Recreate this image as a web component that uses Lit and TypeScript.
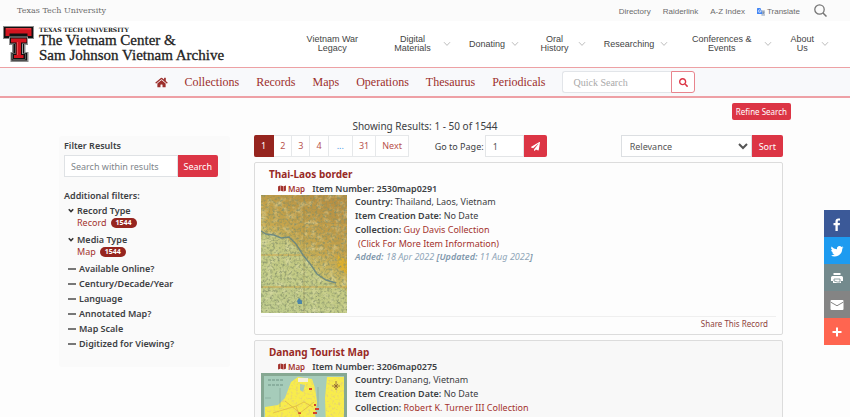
import { LitElement, html, svg, css, nothing } from "lit";
import { customElement, property } from "lit/decorators.js";

interface MapRecord {
  title: string;
  item: string;
  country: string;
  date: string;
  collection: string;
  added: string;
  updated: string;
  art: "terrain" | "city";
}

const SITE_NAV = [
  { label: "Vietnam War Legacy", menu: false },
  { label: "Digital Materials", menu: true },
  { label: "Donating", menu: true },
  { label: "Oral History", menu: true },
  { label: "Researching", menu: true },
  { label: "Conferences & Events", menu: true },
  { label: "About Us", menu: true },
];

const ARCHIVE_NAV = ["Collections", "Records", "Maps", "Operations", "Thesaurus", "Periodicals"];

const CLOSED_FILTERS = [
  "Available Online?",
  "Century/Decade/Year",
  "Language",
  "Annotated Map?",
  "Map Scale",
  "Digitized for Viewing?",
];

const RECORDS: MapRecord[] = [
  {
    title: "Thai-Laos border",
    item: "2530map0291",
    country: "Thailand, Laos, Vietnam",
    date: "No Date",
    collection: "Guy Davis Collection",
    added: "18 Apr 2022",
    updated: "11 Aug 2022",
    art: "terrain",
  },
  {
    title: "Danang Tourist Map",
    item: "3206map0275",
    country: "Danang, Vietnam",
    date: "No Date",
    collection: "Robert K. Turner III Collection",
    added: "18 Apr 2022",
    updated: "11 Aug 2022",
    art: "city",
  },
];

const chevron = html`<svg class="chev" viewBox="0 0 8 6" aria-hidden="true">
  <path d="M1 1.2 4 4.4 7 1.2" fill="none" stroke="currentColor" />
</svg>`;

const magnifier = html`<svg class="glass" viewBox="0 0 512 512" aria-hidden="true">
  <path fill="currentColor" d="M505 442.700 405.300 343c-4.500-4.500-10.600-7-17-7H372c27.600-35.300 44-79.700 44-128C416 93.100 322.900 0 208 0S0 93.100 0 208s93.100 208 208 208c48.300 0 92.700-16.400 128-44v16.300c0 6.400 2.500 12.500 7 17l99.700 99.700c9.400 9.400 24.600 9.400 33.900 0l28.300-28.300c9.400-9.400 9.400-24.600.1-34zM208 336c-70.700 0-128-57.200-128-128 0-70.700 57.200-128 128-128 70.700 0 128 57.200 128 128 0 70.700-57.200 128-128 128z" />
</svg>`;

const mapIcon = html`<svg class="map-icon" viewBox="0 0 576 512" aria-hidden="true">
  <path fill="currentColor" d="M0 117.660v346.320c0 11.320 11.430 19.060 21.940 14.860L160 416V32L20.120 87.950A32.006 32.006 0 0 0 0 117.660zM192 416l192 64V96L192 32v384zM554.060 33.160 416 96v384l139.880-55.950A31.996 31.996 0 0 0 576 394.340V48.020c0-11.320-11.430-19.060-21.940-14.860z" />
</svg>`;

@customElement("map-thumb")
export class MapThumb extends LitElement {
  @property() art: MapRecord["art"] = "terrain";

  static styles = css`
    :host { display: block; width: 86px; height: 118px; }
    svg { display: block; width: 100%; height: 100%; }
  `;

  private terrain() {
    return svg`
      <defs>
        <linearGradient id="land" x1="0.75" y1="0" x2="0.3" y2="1">
          <stop offset="0" stop-color="#b88f42" />
          <stop offset="0.4" stop-color="#c4a44c" />
          <stop offset="0.6" stop-color="#cbc06a" />
          <stop offset="1" stop-color="#c0c582" />
        </linearGradient>
        <filter id="grain" x="0" y="0" width="100%" height="100%">
          <feTurbulence type="fractalNoise" baseFrequency="0.42" numOctaves="3" seed="8" />
          <feColorMatrix values="0 0 0 0 0.22  0 0 0 0 0.27  0 0 0 0 0.14  2.600 0 0 0 -1.150" />
        </filter>
        <filter id="light" x="0" y="0" width="100%" height="100%">
          <feTurbulence type="fractalNoise" baseFrequency="0.16" numOctaves="3" seed="3" />
          <feColorMatrix values="0 0 0 0 0.82  0 0 0 0 0.8  0 0 0 0 0.48  0 2.400 0 0 -1.150" />
        </filter>
      </defs>
      <rect width="86" height="118" fill="url(#land)" />
      <path d="M0 38 26 43 44 62 60 84 86 96V118H0z" fill="#bfd092" opacity=".6" />
      <rect width="86" height="118" filter="url(#light)" opacity=".55" />
      <path d="M77 60 86 66V79L76 72z" fill="#e0b02c" opacity=".9" />
      <path d="M0 30H86M0 60H86M0 92H86" stroke="#d0a84c" stroke-width="1.500" opacity=".7" />
      <path d="M43 0V118" stroke="#8c7a40" stroke-width=".6" opacity=".7" />
      <path d="M0 36 5 39 13 40 20 43 28 42 35 49 42 60 50 70 56 79 65 85 75 88" fill="none" stroke="#5a8088" stroke-width="1.400" opacity=".85" />
      <rect width="86" height="118" filter="url(#grain)" opacity=".8" />
      <path d="M36 106 38 103 41 106V109H37z" fill="#4c86a8" />
    `;
  }

  private city() {
    return svg`
      <defs>
        <filter id="streets" x="0" y="0" width="100%" height="100%">
          <feTurbulence type="fractalNoise" baseFrequency="0.4" numOctaves="2" seed="5" />
          <feColorMatrix values="0 0 0 0 0.75  0 0 0 0 0.6  0 0 0 0 0.2  2.400 0 0 0 -1.200" />
          <feComposite in2="SourceGraphic" operator="in" />
        </filter>
      </defs>
      <rect width="86" height="118" fill="#86a892" />
      <rect x="3" y="3" width="80" height="112" fill="#a6ccba" />
      <path d="M4 34 17 32 24 25 30 9 37 4 51 6 54 15 56 29 54 42 58 56 64 70 68 118H4z" fill="#f8ec4c" />
      <path d="M66 4H83V118H76L70 76 65 52 64 25z" fill="#f8ec4c" />
      <path d="M39 11 44 12 42 19 39 17z" fill="#a6ccba" />
      <path filter="url(#streets)" d="M4 34 17 32 24 25 30 9 37 4 51 6 54 15 56 29 54 42 58 56 64 70 68 118H4zM66 4H83V118H76L70 76 65 52 64 25z" />
      <path d="M37 5H47V9H37z" fill="#f4efda" />
      <path d="M7 7H23M7 12H23" stroke="#6f9384" stroke-width="1" stroke-dasharray="3 1" />
      <path d="M19 15V34M57 14V34M4 25H10" stroke="#77998a" stroke-width=".5" />
      <path d="M54 35H58V37H54zM52 39H56V41H52zM48 15H51V17H48zM37 39H40V41H37zM53 31H55V33H53z" fill="#d3402c" />
      <path d="M75 8V17M71 13H79M73 11 77 15M77 11 73 15" stroke="#8c5f35" stroke-width=".8" />
      <path d="M35 33 43 29 52 34M24 28 39 40 53 29M12 40 35 33 40 47" fill="none" stroke="#d7a843" stroke-width=".6" />
    `;
  }

  render() {
    return html`<svg viewBox="0 0 86 118" preserveAspectRatio="none" role="img" aria-label="Map thumbnail">
      ${this.art === "terrain" ? this.terrain() : this.city()}
    </svg>`;
  }
}

@customElement("record-card")
export class RecordCard extends LitElement {
  @property({ attribute: false }) record!: MapRecord;

  static styles = css`
    :host { display: block; }
    .card { border: 1px solid #dcdcdc; border-radius: 2px; padding: 3px 6px 4px; }
    :host(.alt) .card { background: #f8f8f8; }
    a { color: #a3322d; text-decoration: none; }
    b { font-weight: 600; }
    .title { margin: 0 0 0 8px; font-size: 10px; line-height: 16px; font-weight: 700; }
    .title a { color: #982a26; }
    .number { display: flex; gap: 7px; margin-left: 17px; line-height: 13px; font-weight: 600; }
    .kind { display: flex; align-items: center; gap: 2px; font-size: 8px; }
    .map-icon { width: 8px; height: 7px; }
    .body { display: flex; gap: 8px; }
    .facts { line-height: 14px; }
    .facts p { margin: 0; }
    .more { padding-left: 3px; }
    .dates { color: #8fa5b8; font-style: italic; line-height: 12px; }
    .dates b { color: #7f97ac; }
    .foot { margin-top: 3px; border-top: 1px solid #efefef; padding: 1px 8px 0 0; text-align: right; font-size: 8px; line-height: 12px; }
    .foot a { color: #8f4440; }
  `;

  render() {
    const r = this.record;
    return html`<article class="card">
      <h2 class="title"><a href="#">${r.title}</a></h2>
      <div class="number">
        <a class="kind" href="#">${mapIcon}Map</a>
        <span>Item Number: ${r.item}</span>
      </div>
      <div class="body">
        <map-thumb .art=${r.art}></map-thumb>
        <div class="facts">
          <p><b>Country:</b> ${r.country}</p>
          <p><b>Item Creation Date:</b> ${r.date}</p>
          <p><b>Collection:</b> <a href="#">${r.collection}</a></p>
          <p class="more"><a href="#">(Click For More Item Information)</a></p>
          <p class="dates"><b>Added:</b> ${r.added} <b>[Updated:</b> ${r.updated}<b>]</b></p>
        </div>
      </div>
      <div class="foot"><a href="#">Share This Record</a></div>
    </article>`;
  }
}

@customElement("app-root")
export class AppRoot extends LitElement {
  static styles = css`
    :host {
      display: block;
      height: 100vh;
      overflow: hidden;
      background: #fdfdfd;
      color: #3c4043;
      font: 9px/13px "Noto Sans", sans-serif;
    }
    * { box-sizing: border-box; }
    a { text-decoration: none; color: inherit; }
    button, input, select { font: inherit; margin: 0; min-width: 0; }
    svg { display: block; flex: none; }

    .utility { display: flex; align-items: center; height: 21px; padding: 0 23px 0 17px; background: #fbfbfb; color: #6b6b6b; }
    .campus { font: 8px/12px "DejaVu Serif", serif; margin-right: auto; }
    .quick { display: flex; align-items: center; gap: 12px; font: 8px/12px "Liberation Sans", sans-serif; padding-top: 3px; }
    .translate { display: flex; align-items: center; gap: 2px; }
    .translate svg { width: 8px; height: 8px; }
    .open-search { border: 0; padding: 0; background: none; color: #757575; margin-left: 14px; }
    .open-search svg { width: 13px; height: 13px; }

    .masthead { display: flex; align-items: center; height: 46px; padding: 0 21px 0 3px; background: #fff; }
    .brand { display: flex; align-items: flex-start; gap: 5px; color: #222; }
    .brand-mark { width: 31px; height: 36px; }
    .brand-small { display: block; font: bold 6px/7px "DejaVu Serif", serif; }
    .brand-name { display: block; font: 15px/15px "Liberation Serif", serif; -webkit-text-stroke: 0.3px currentColor; white-space: nowrap; }
    .site-nav {
      display: grid;
      grid-template-columns: 74fr 69fr 55fr 55fr 69fr 91fr 45fr;
      gap: 12px;
      align-items: center;
      flex: 1;
      max-width: 534px;
      margin-left: auto;
      font: 9px/9px "Liberation Sans", sans-serif;
      color: #444;
    }
    .site-nav a { display: flex; align-items: center; text-align: center; }
    .site-nav span { flex: 1; padding: 0 4px; }
    .chev { width: 8px; height: 6px; color: #bdbdbd; }

    .archive-nav {
      display: flex;
      align-items: center;
      justify-content: center;
      gap: 17px;
      height: 31px;
      border-top: 1px solid #eda1a4;
      border-bottom: 2px solid #eea0a5;
      background: #f8f9fb;
      color: #9c2f2c;
      font: 12px/16px "Liberation Serif", serif;
    }
    .home svg { width: 13px; height: 11px; }
    .search { display: flex; }
    .search input { width: 109px; height: 22px; padding: 0 10px; border: 1px solid #e2e5e9; border-right: 0; border-radius: 3px 0 0 3px; background: #fff; font-size: 10px; }
    .search input::placeholder { color: #a9a9a9; }
    .search button { display: flex; align-items: center; justify-content: center; width: 24px; height: 22px; border: 1px solid #e8848d; border-radius: 0 3px 3px 0; background: #fff; color: #dc3545; padding: 0; }
    .glass { width: 9px; height: 9px; }

    .red { border: 0; background: #dc3545; color: #fff; border-radius: 2px; padding: 0 6px; height: 22px; }
    .refine { display: flex; justify-content: flex-end; padding: 5px 59px 0; }
    .refine .red { height: 17px; padding: 0 4px; font-size: 8px; }
    .showing { margin: 0; padding: 0 0 2px; text-align: center; font-size: 10px; line-height: 13px; }

    .content { display: grid; grid-template-columns: 171px minmax(0, 1fr); gap: 24px; padding: 0 67px 0 59px; align-items: start; }
    .filters { background: #fafafa; border-radius: 3px; padding: 3px 12px 17px 5px; margin-top: 1px; }
    .filters h2 { margin: 0; font-size: 9px; line-height: 13px; font-weight: 600; }
    .within { display: flex; margin: 3px 0 12px; }
    .within input { flex: 1; height: 22px; border: 1px solid #dfe2e5; border-radius: 0; background: #fff; padding: 0 6px; }
    .within input::placeholder { color: #80868b; }
    .within .red { border-radius: 0 2px 2px 0; }
    .group { margin: 2px 0 5px 4px; }
    .toggle { display: flex; align-items: center; gap: 3px; border: 0; background: none; padding: 0; color: inherit; font-weight: 600; line-height: 13px; }
    .group .chev { width: 6px; height: 5px; color: #333; stroke-width: 2; }
    .choice { display: flex; align-items: center; gap: 4px; margin-left: 9px; line-height: 11px; color: #a3322d; }
    .badge { background: #96251f; color: #fff; border-radius: 5px; padding: 0 5px; font-size: 7px; font-weight: 700; line-height: 10px; }
    .closed { margin: 4px 0 0 4px; display: grid; gap: 2px; }
    .dash { width: 8px; height: 2px; background: #777; }

    .controls { display: flex; align-items: flex-start; height: 22px; margin-bottom: 5px; }
    .pages { display: flex; list-style: none; margin: 0; padding: 0; color: #b9534e; }
    .pages a { display: block; height: 22px; line-height: 20px; padding: 0 6px; border: 1px solid #e6e8ea; border-left: 0; background: #fff; }
    .pages .current { background: #96251f; border-color: #96251f; color: #fff; border-radius: 2px 0 0 2px; padding: 0 7px; }
    .pages .gap { color: #4b9be8; padding: 0 8px; }
    .goto { display: flex; align-items: center; margin: 0 74px 0 auto; }
    .goto input { width: 39px; height: 22px; margin-left: 1px; border: 1px solid #e3e5e7; background: #fff; color: #555; padding: 0 7px; }
    .goto .red { display: flex; align-items: center; border-radius: 0 2px 2px 0; padding: 0 7px; }
    .goto svg { width: 9px; height: 9px; }
    .sort { display: flex; }
    .sort select { width: 131px; height: 22px; border: 1px solid #dcdfe2; border-radius: 0; background: #fff; color: #555; padding: 0 4px; }
    .sort .red { border-radius: 0 2px 2px 0; padding: 0 7px; }
    .list { display: grid; gap: 5px; }

    .share { position: fixed; right: 0; top: 210px; display: grid; grid-auto-rows: 27px; width: 26px; }
    .share a { display: flex; align-items: center; justify-content: center; color: #fff; }
    .share svg { width: 16px; height: 16px; }
    .facebook { background: #3b5998; }
    .twitter { background: #1d9bf0; }
    .print { background: #738a8d; }
    .email { background: #848484; }
    .addthis { background: #ff6550; }
  `;

  private brandMark() {
    return html`<svg class="brand-mark" viewBox="0 0 31 36" aria-hidden="true">
      <path fill="#8c8c8c" d="M0 0H31V13H25V19H22.500V26H25.500V36H7.500V26H9V19H6V13H0z" />
      <path fill="#111" d="M1 1H30V12H24V18H21V27H24V34.500H8.500V27H10.500V18H7V12H1z" />
      <path fill="#d3141f" d="M2.500 2H28.500V10H24.500V7.500H6.500V10H2.500z" />
      <path fill="#9a9a9a" d="M6 10.500H25V18H20V27.500H22.500V33.500H9.500V27.500H12V18H6z" />
      <path fill="#111" d="M7 11.500H24V17.500H19V28H22V33H10V28H12.500V17.500H7z" />
      <path fill="#d3141f" d="M8 12.500H23.500V16.500H18V29H20.500V32H11V29H13.500V16.500H8z" />
      <path fill="#ef5b60" d="M3 2.500H28V3.300H3zM14 16H14.800V29H14z" />
    </svg>`;
  }

  private filterGroup(name: string, value: string) {
    return html`<div class="group">
      <button class="toggle" type="button" aria-expanded="true">${chevron}${name}</button>
      <a class="choice" href="#">${value}<span class="badge">1544</span></a>
    </div>`;
  }

  render() {
    return html`
      <div class="utility">
        <a class="campus" href="#">Texas Tech University</a>
        <nav class="quick" aria-label="Utility">
          <a href="#">Directory</a>
          <a href="#">Raiderlink</a>
          <a href="#">A-Z Index</a>
          <a class="translate" href="#">
            <svg viewBox="0 0 16 16" aria-hidden="true">
              <path fill="#c3ccd8" d="M7 4H15A1 1 0 0 1 16 5V15A1 1 0 0 1 15 16H9z" />
              <path fill="#4285f4" d="M1 0H7L11 12H1A1 1 0 0 1 0 11V1A1 1 0 0 1 1 0z" />
              <path fill="none" stroke="#fff" stroke-width="1.300" d="M7 4.600A2.500 2.500 0 1 0 7.600 6.300H5" />
              <path fill="none" stroke="#5b6f8a" stroke-width="1" d="M10 8H15M12.500 7V8M14 8C13.500 10 12 11.500 11 12M11.500 9.500 14 12.500" />
            </svg>
            Translate
          </a>
        </nav>
        <button class="open-search" type="button" aria-label="Open search">
          <svg viewBox="0 0 13 13"><circle cx="5.500" cy="5.500" r="4.700" fill="none" stroke="currentColor" stroke-width="1.300" /><path d="M9 9 12.500 12.500" stroke="currentColor" stroke-width="1.500" /></svg>
        </button>
      </div>

      <header class="masthead">
        <a class="brand" href="#">
          ${this.brandMark()}
          <span>
            <span class="brand-small">TEXAS TECH UNIVERSITY</span>
            <span class="brand-name">The Vietnam Center &amp;</span>
            <span class="brand-name">Sam Johnson Vietnam Archive</span>
          </span>
        </a>
        <nav class="site-nav" aria-label="Site">
          ${SITE_NAV.map((n) => html`<a href="#"><span>${n.label}</span>${n.menu ? chevron : nothing}</a>`)}
        </nav>
      </header>

      <nav class="archive-nav" aria-label="Virtual archive">
        <a class="home" href="#" aria-label="Home">
          <svg viewBox="0 0 576 512"><path fill="currentColor" d="M280.370 148.260 96 300.110V464a16 16 0 0 0 16 16l112.060-.290a16 16 0 0 0 15.920-16V368a16 16 0 0 1 16-16h64a16 16 0 0 1 16 16v95.640a16 16 0 0 0 16 16.050L464 480a16 16 0 0 0 16-16V300L295.670 148.260a12.190 12.190 0 0 0-15.300 0zM571.600 251.470 488 182.560V44.050a12 12 0 0 0-12-12h-56a12 12 0 0 0-12 12v72.610L318.470 43a48 48 0 0 0-61 0L4.340 251.470a12 12 0 0 0-1.600 16.900l25.500 31A12 12 0 0 0 45.150 301l235.220-193.740a12.190 12.190 0 0 1 15.300 0L530.900 301a12 12 0 0 0 16.900-1.600l25.500-31a12 12 0 0 0-1.700-16.930z" /></svg>
        </a>
        ${ARCHIVE_NAV.map((n) => html`<a href="#">${n}</a>`)}
        <form class="search">
          <input type="text" placeholder="Quick Search" aria-label="Quick Search" />
          <button type="button" aria-label="Search">${magnifier}</button>
        </form>
      </nav>

      <div class="refine"><button class="red" type="button">Refine Search</button></div>
      <p class="showing">Showing Results: 1 - 50 of 1544</p>

      <main class="content">
        <aside class="filters">
          <h2><label for="within">Filter Results</label></h2>
          <form class="within">
            <input id="within" type="text" placeholder="Search within results" />
            <button class="red" type="button">Search</button>
          </form>
          <h2>Additional filters:</h2>
          ${this.filterGroup("Record Type", "Record")} ${this.filterGroup("Media Type", "Map")}
          <div class="closed">
            ${CLOSED_FILTERS.map((f) => html`<button class="toggle" type="button" aria-expanded="false"><span class="dash"></span>${f}</button>`)}
          </div>
        </aside>

        <section>
          <div class="controls">
            <ul class="pages">
              <li><a class="current" href="#" aria-current="page">1</a></li>
              <li><a href="#">2</a></li>
              <li><a href="#">3</a></li>
              <li><a href="#">4</a></li>
              <li><a class="gap" href="#">...</a></li>
              <li><a href="#">31</a></li>
              <li><a href="#">Next</a></li>
            </ul>
            <form class="goto">
              <label for="page">Go to Page:</label>
              <input id="page" type="text" .value=${"1"} />
              <button class="red" type="button" aria-label="Go">
                <svg viewBox="0 0 512 512"><path fill="currentColor" d="M476 3.200 12.500 270.600c-18.100 10.400-15.800 35.600 2.200 43.200L121 358.400l287.300-253.200c5.500-4.900 13.300 2.600 8.600 8.300L176 407v80.500c0 23.600 28.500 32.900 42.500 15.800L282 426l124.600 52.200c14.200 6 30.400-2.900 33-18.200l72-432C515 7.800 493.300-6.800 476 3.200z" /></svg>
              </button>
            </form>
            <form class="sort">
              <select aria-label="Sort by"><option>Relevance</option></select>
              <button class="red" type="button">Sort</button>
            </form>
          </div>
          <div class="list">
            ${RECORDS.map((r, i) => html`<record-card class=${i % 2 ? "alt" : ""} .record=${r}></record-card>`)}
          </div>
        </section>
      </main>

      <nav class="share" aria-label="Share">
        <a class="facebook" href="#" aria-label="Facebook"><svg viewBox="0 0 32 32"><path fill="currentColor" d="M22 5.160c-.4-.05-1.800-.17-3.400-.17-3.400 0-5.700 2.070-5.700 5.860v3.270H9v4.430h3.900V29.900h4.660V18.560h3.860l.6-4.430h-4.470V11.300c0-1.280.35-2.150 2.200-2.150H22z" /></svg></a>
        <a class="twitter" href="#" aria-label="Twitter"><svg viewBox="0 0 32 32"><path fill="currentColor" d="M29 8.560a10 10 0 0 1-3 .83 5.300 5.300 0 0 0 2.300-2.900c-1 .6-2.160 1.050-3.360 1.290a5.300 5.300 0 0 0-9.030 4.830A15 15 0 0 1 5 7.080a5.300 5.300 0 0 0 1.650 7.070 5 5 0 0 1-2.400-.66v.07a5.300 5.300 0 0 0 4.250 5.200 5 5 0 0 1-2.400.09 5.300 5.300 0 0 0 4.950 3.670A10.700 10.700 0 0 1 3.220 24.700a15 15 0 0 0 8.130 2.390c9.760 0 15.100-8.080 15.100-15.090v-.69A11 11 0 0 0 29 8.560z" /></svg></a>
        <a class="print" href="#" aria-label="Print"><svg viewBox="0 0 32 32"><path fill="currentColor" d="M9 6H23V10H9zM7 12H25A3 3 0 0 1 28 15V22H24V26H8V22H4V15A3 3 0 0 1 7 12z" /><path fill="none" stroke="#738a8d" stroke-width="1.600" d="M9 11H23M10 18H22V24H17L10 22z" /></svg></a>
        <a class="email" href="#" aria-label="Email"><svg viewBox="0 0 32 32"><path fill="currentColor" d="M5 6H27A2 2 0 0 1 29 8V24A2 2 0 0 1 27 26H5A2 2 0 0 1 3 24V8A2 2 0 0 1 5 6z" /><path fill="none" stroke="#848484" stroke-width="2" d="M3 10 16 17.500 29 10" /></svg></a>
        <a class="addthis" href="#" aria-label="More"><svg viewBox="0 0 32 32"><path fill="currentColor" d="M14 7H18V14H25V18H18V25H14V18H7V14H14z" /></svg></a>
      </nav>
    `;
  }
}
